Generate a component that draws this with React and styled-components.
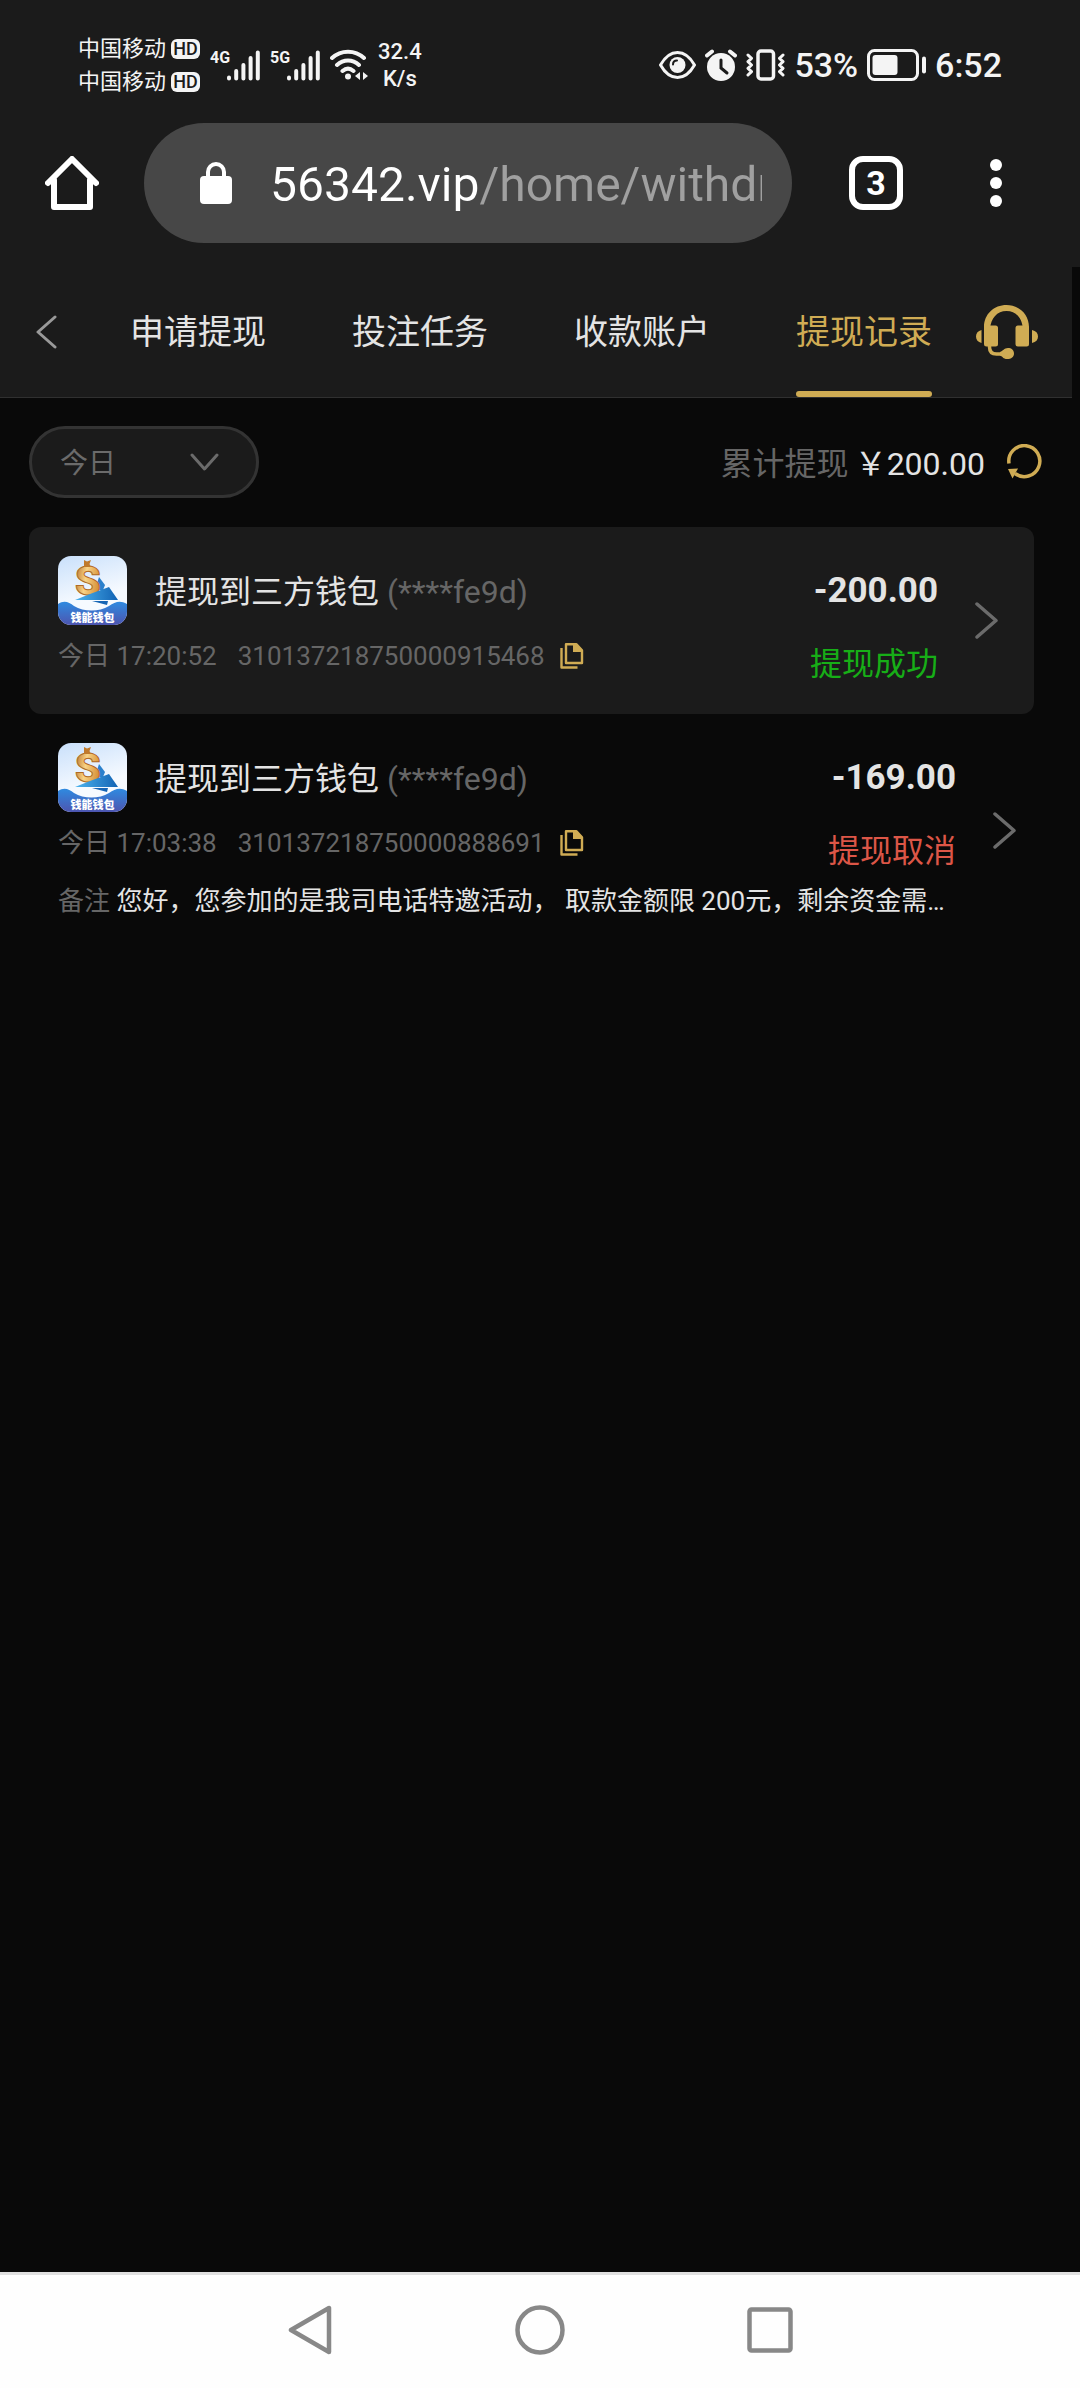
import React, { useState } from "react";
import styled, { createGlobalStyle } from "styled-components";

const GOLD = "#d0ac54";

const GlobalStyle = createGlobalStyle`
  * { box-sizing: border-box; }
  body {
    margin: 0; background: #090909; color: #e4e4e4;
    font-family: Roboto, "Noto Sans CJK SC", sans-serif;
  }
  button, select, input { font-family: inherit; }
  svg { display: block; flex: none; }
`;

const Screen = styled.div`
  min-height: 100vh; display: flex; flex-direction: column;
`;
const IconButton = styled.button`
  display: flex; align-items: center; justify-content: center;
  padding: 0; border: 0; background: none; color: inherit;
  cursor: pointer; flex: none;
`;

/* status bar */
const StatusBar = styled.div`
  display: flex; justify-content: space-between; align-items: center;
  padding: 32px 78px 25px; background: #1b1b1b; color: #f4f4f4;
`;
const StatusGroup = styled.div`
  display: flex; align-items: center; gap: ${(p) => p.$gap}px;
`;
const Carrier = styled.div`
  display: flex; align-items: center; gap: 5px;
  font-size: 22px; line-height: 33px;
`;
const HdBadge = styled.span`
  width: 29px; border-radius: 6px; background: #f4f4f4; color: #1b1b1b;
  font-size: 18px; line-height: 20px; font-weight: 500; text-align: center;
`;
const Signal = styled.div`
  display: flex; align-items: flex-start;
`;
const SignalLabel = styled.span`
  width: 17px; white-space: nowrap;
  font-size: 16px; line-height: 16px; font-weight: 700;
`;
const NetSpeed = styled.div`
  font-size: 22px; line-height: 27px; font-weight: 500; text-align: center;
`;
const StatusText = styled.span`
  font-size: 34px; line-height: 40px; font-weight: 500;
`;

/* browser toolbar */
const Toolbar = styled.div`
  display: flex; align-items: center;
  padding: 0 48px 24px 45px; background: #1b1b1b; color: #fff;
`;
const AddressBar = styled.label`
  flex: 1; min-width: 0; height: 120px; margin: 0 57px 0 45px; padding: 0 30px 0 56px;
  display: flex; align-items: center; gap: 38px;
  border-radius: 60px; background: #474747;
`;
const AddressInput = styled.input`
  flex: 1; min-width: 0; height: 64px; padding: 2px 0 0; border: 0; outline: 0;
  font-size: 48px; color: transparent;
  background: linear-gradient(to right, #fff 208px, #a0a0a0 208px);
  background-clip: text; -webkit-background-clip: text;
`;
const TabCount = styled(IconButton)`
  width: 54px; height: 54px; border: 6px solid #fff; border-radius: 14px;
  font-size: 34px; line-height: 42px; font-weight: 700;
`;
const MenuButton = styled(IconButton)`
  width: 72px; height: 72px; margin-left: 57px;
`;

/* web page */
const Page = styled.main`
  flex: 1; margin-right: 8px;
`;
const Header = styled.header`
  display: flex; align-items: center; height: 131px; padding: 0 34px 0 36px;
  background: #1b1b1b; border-bottom: 1px solid #303030;
`;
const Tabs = styled.nav`
  flex: 1; display: flex; justify-content: space-between; align-self: stretch;
  margin: 0 44px 0 73px;
`;
const Tab = styled.a`
  padding-top: 39px; white-space: nowrap; text-decoration: none;
  font-size: 34px; line-height: 52px;
  color: ${(p) => (p.$active ? GOLD : "#e4e4e4")};
  &::after {
    content: ""; display: block; height: 6px; margin-top: 33px; border-radius: 3px;
    background: ${(p) => (p.$active ? GOLD : "transparent")};
  }
`;
const Summary = styled.div`
  display: flex; justify-content: space-between; align-items: center;
  padding: 28px 30px 29px 29px;
`;
const Filter = styled.label`
  display: grid; align-items: center; width: 230px; height: 72px; color: #6b6b6b;
  & > * { grid-area: 1 / 1; }
  & > svg { justify-self: end; margin-right: 40px; pointer-events: none; }
`;
const FilterSelect = styled.select`
  appearance: none; width: 100%; height: 100%; padding: 2px 28px 0;
  border: 3px solid #333; border-radius: 36px; background: #1b1b1b;
  color: inherit; font-size: 28px;
`;
const Total = styled.div`
  display: flex; align-items: center; font-size: 32px; line-height: 44px;
  & > span { padding-top: 3px; }
`;
const Muted = styled.span`
  color: #666;
`;
const Money = styled.span`
  margin: 0 22px 0 6px;
`;
const List = styled.ul`
  list-style: none; margin: 0; padding: 0 20px 0 29px;
`;
const Item = styled.li`
  display: flex; align-items: center; gap: 37px; padding: 29px 36px 29px 29px;
  margin-right: ${(p) => (p.$card ? "18px" : "0")};
  background: ${(p) => (p.$card ? "#1b1b1b" : "transparent")};
  border-radius: 12px;
`;
const ItemBody = styled.div`
  flex: 1; min-width: 0; display: grid; grid-template-columns: 1fr auto; row-gap: 16px;
`;
const Title = styled.div`
  display: flex; align-items: center; gap: 28px; height: 69px;
  font-size: 32px; line-height: 44px;
  & > span { padding-top: 3px; }
`;
const Meta = styled.div`
  display: flex; align-items: center; height: 30px; color: #666;
  font-size: 26px; line-height: 30px;
`;
const OrderNo = styled.span`
  margin: 0 15px 0 21px;
`;
const Amount = styled.div`
  font-size: 35px; line-height: 69px; font-weight: 700; text-align: right;
`;
const Status = styled.div`
  padding-top: 2px; font-size: 32px; line-height: 42px; text-align: right;
  color: ${(p) => (p.$ok ? "#17ae17" : "#dc5647")};
`;
const Note = styled.div`
  grid-column: 1 / -1; margin-top: -6px; padding-top: 2px;
  font-size: 26px; line-height: 34px;
  white-space: nowrap; overflow: hidden; text-overflow: ellipsis;
`;

/* system navigation */
const SystemNav = styled.nav`
  display: grid; grid-template-columns: repeat(3, 1fr); justify-items: center;
  height: 116px; padding: 0 18% 3px; border-top: 3px solid #e0e0e0;
  background: #fefefe; color: #888;
`;

const SignalBars = () => (
  <svg width="33" height="31" viewBox="0 0 33 31" stroke="currentColor" strokeWidth="4" strokeLinecap="round">
    <path d="M2 27.500v1M9.200 21v7.500M16.400 15v13.500M23.600 8v20.500M30.800 2.500v26" />
  </svg>
);
const WifiIcon = () => (
  <svg width="38" height="32" viewBox="0 0 38 32" fill="none" stroke="currentColor" strokeWidth="4" strokeLinecap="round">
    <path d="M2 9c9-8.500 23-8.500 32 0M7 16c6.500-6 15.500-6 22 0M12.500 22c3.500-3 7.500-3 11 0" />
    <circle cx="18" cy="27.500" r="3" fill="currentColor" stroke="none" />
    <path d="M30 23v8l-5-4zM33 23v8l5-4z" fill="currentColor" stroke="none" />
  </svg>
);
const EyeIcon = () => (
  <svg width="37" height="28" viewBox="0 0 37 28" fill="none" stroke="currentColor" strokeWidth="3">
    <path d="M1.500 14C6 6 12 1.500 18.500 1.500S31 6 35.500 14C31 22 25 26.500 18.500 26.500S6 22 1.500 14z" strokeLinejoin="round" />
    <circle cx="18.500" cy="14" r="8" fill="currentColor" stroke="none" />
    <path d="M14 13.500c0-2.500 1.500-4 4-4" stroke="#1b1b1b" strokeWidth="2" strokeLinecap="round" />
  </svg>
);
const AlarmIcon = () => (
  <svg width="32" height="32" viewBox="0 0 32 32" fill="none" strokeLinecap="round">
    <circle cx="16" cy="18" r="14" fill="currentColor" />
    <path d="M2 6.500L7 2.500M30 6.500L25 2.500" stroke="currentColor" strokeWidth="4" />
    <path d="M16 11v8l6 5" stroke="#1b1b1b" strokeWidth="3" />
  </svg>
);
const VibrateIcon = () => (
  <svg width="39" height="32" viewBox="0 0 39 32" fill="none" stroke="currentColor" strokeWidth="3" strokeLinejoin="round" strokeLinecap="round">
    <rect x="12" y="2" width="15.500" height="28" rx="3" strokeWidth="3.500" />
    <path d="M2 6l3.500 3.300L2 12.600l3.500 3.400L2 19.300l3.500 3.300L2 26M37 6l-3.500 3.300 3.500 3.300-3.500 3.400 3.500 3.300-3.500 3.300L37 26" />
  </svg>
);
const BatteryIcon = () => (
  <svg width="59" height="32" viewBox="0 0 59 32" fill="none" stroke="currentColor">
    <rect x="1.500" y="1.500" width="49" height="29" rx="6" strokeWidth="3" />
    <rect x="5.500" y="6" width="25" height="20" rx="3" fill="currentColor" stroke="none" />
    <path d="M57 9.500v13" strokeWidth="4" strokeLinecap="round" />
  </svg>
);
const HomeIcon = () => (
  <svg width="54" height="54" viewBox="0 0 54 54" fill="none" stroke="currentColor" strokeWidth="6" strokeLinecap="round" strokeLinejoin="round">
    <path d="M3 27L27 3l24 24M9 24v27h36V24" />
  </svg>
);
const LockIcon = () => (
  <svg width="32" height="42" viewBox="0 0 32 42" fill="none">
    <rect y="14" width="32" height="28" rx="4" fill="currentColor" />
    <path d="M8 16V10a8 8 0 0 1 16 0v6" stroke="currentColor" strokeWidth="4" />
  </svg>
);
const DotsIcon = () => (
  <svg width="12" height="48" viewBox="0 0 12 48" fill="currentColor">
    <circle cx="6" cy="6" r="6" />
    <circle cx="6" cy="24" r="6" />
    <circle cx="6" cy="42" r="6" />
  </svg>
);
const BackIcon = () => (
  <svg width="21" height="34" viewBox="0 0 21 34" fill="none" stroke="#999" strokeWidth="3" strokeLinecap="round" strokeLinejoin="round">
    <path d="M19 2L2 17l17 15" />
  </svg>
);
const HeadsetIcon = () => (
  <svg width="62" height="55" viewBox="0 0 62 55" fill={GOLD}>
    <path d="M8 24V22C8 9 18 0 30.500 0S53 9 53 22v2h-6C46 13 40 6 30.500 6S15 13 14 24z" />
    <rect x="8" y="20.500" width="14" height="21" rx="2.500" />
    <rect x="39.500" y="20.500" width="13.500" height="21" rx="2.500" />
    <path d="M5.500 25v13C2 37 0 35 0 31.500S2 26 5.500 25zM56 25v13c4-1 6-3 6-6.500S60 26 56 25z" />
    <path d="M13.500 40v2c0 4.500 2.500 7 7 7h6" fill="none" stroke={GOLD} strokeWidth="3.500" />
    <path d="M24 47c3-1 4-4 8-4 3.500 0 6 2 6 5.500S35.500 54 31 54c-4 0-4-2.500-7-3.500z" />
  </svg>
);
const ArrowDown = () => (
  <svg width="29" height="18" viewBox="0 0 29 18" fill="none" stroke="#6b6b6b" strokeWidth="3" strokeLinecap="round" strokeLinejoin="round">
    <path d="M2 2l12.500 14L27 2" />
  </svg>
);
const RefreshIcon = () => (
  <svg width="35" height="36" viewBox="0 0 35 36" fill="none">
    <path d="M2 19.500A15.500 15.500 0 1 1 8 29.500" stroke={GOLD} strokeWidth="3.500" />
    <path d="M1 25l10-.5-5.500 10z" fill={GOLD} />
  </svg>
);
const CopyIcon = () => (
  <svg width="24" height="26" viewBox="0 0 24 26" fill="none" stroke={GOLD} strokeWidth="2.400" strokeLinejoin="round">
    <path d="M6 1.200h10.500l5.500 6V20H6z" />
    <path d="M13 1v8h9V7l-5.500-6z" fill={GOLD} stroke="none" />
    <path d="M1.500 5v19.500h16" />
  </svg>
);
const ArrowRight = () => (
  <svg width="23" height="37" viewBox="0 0 23 37" fill="none" stroke="#6b6b6b" strokeWidth="3.500" strokeLinecap="round" strokeLinejoin="round">
    <path d="M2 2l19 16.500L2 35" />
  </svg>
);

const WalletLogo = ({ id }) => (
  <svg width="69" height="69" viewBox="0 0 69 69" aria-hidden="true">
    <defs>
      <linearGradient id={`${id}-sky`} x1="0" y1="0" x2="0.300" y2="1">
        <stop offset="0" stopColor="#c9e0fb" />
        <stop offset="0.700" stopColor="#f6faff" />
      </linearGradient>
      <linearGradient id={`${id}-sea`} x1="0" y1="0" x2="0" y2="1">
        <stop offset="0" stopColor="#2f8ae0" />
        <stop offset="1" stopColor="#4d55b0" />
      </linearGradient>
      <linearGradient id={`${id}-gold`} x1="0" y1="0" x2="1" y2="0.300">
        <stop offset="0" stopColor="#b3641c" />
        <stop offset="0.500" stopColor="#f8d386" />
        <stop offset="1" stopColor="#d8923a" />
      </linearGradient>
      <linearGradient id={`${id}-boat`} x1="0" y1="0" x2="1" y2="0">
        <stop offset="0" stopColor="#4db4ee" />
        <stop offset="1" stopColor="#1263b4" />
      </linearGradient>
      <clipPath id={`${id}-clip`}>
        <rect width="69" height="69" rx="13" />
      </clipPath>
    </defs>
    <g clipPath={`url(#${id}-clip)`}>
      <rect width="69" height="69" fill={`url(#${id}-sky)`} />
      <path d="M41 21l6 8-2 5h-8z" fill="#2a80cc" />
      <text x="17" y="39" fontFamily="Roboto" fontWeight="900" fontSize="41" fill={`url(#${id}-gold)`} stroke="#b06a24" strokeWidth="1">S</text>
      <path d="M26 4l3 1.500L33 4l-1.500 4L33 11h-7z" fill="#c07a2c" />
      <path d="M17 44l15-6 19-7 9 13z" fill={`url(#${id}-boat)`} />
      <path d="M34 45h16l-1 4z" fill="#1665b5" />
      <path d="M0 48c6-4 11-2 16 2 10 6 25 6 35 0 6-4 11-6 18-2v21H0z" fill={`url(#${id}-sea)`} />
      <text x="34.500" y="66" textAnchor="middle" fontFamily="Noto Sans CJK SC" fontWeight="900" fontSize="11" fill="#fff">钱能钱包</text>
    </g>
  </svg>
);

const tabs = ["申请提现", "投注任务", "收款账户", "提现记录"];
const records = [
  {
    time: "17:20:52",
    orderNo: "310137218750000915468",
    amount: "-200.00",
    status: "提现成功",
    ok: true,
  },
  {
    time: "17:03:38",
    orderNo: "310137218750000888691",
    amount: "-169.00",
    status: "提现取消",
    note: "您好，您参加的是我司电话特邀活动， 取款金额限 200元，剩余资金需…",
  },
];

const Record = ({ record }) => (
  <Item $card={record.ok}>
    <ItemBody>
      <Title>
        <WalletLogo id={`w${record.orderNo}`} />
        <span>
          提现到三方钱包 <Muted>(****fe9d)</Muted>
        </span>
      </Title>
      <Amount>{record.amount}</Amount>
      <Meta>
        <span>今日 {record.time}</span>
        <OrderNo>{record.orderNo}</OrderNo>
        <IconButton
          aria-label="复制"
          onClick={() => navigator.clipboard?.writeText(record.orderNo)}
        >
          <CopyIcon />
        </IconButton>
      </Meta>
      <Status $ok={record.ok}>{record.status}</Status>
      {record.note ? (
        <Note>
          <Muted>备注</Muted> {record.note}
        </Note>
      ) : null}
    </ItemBody>
    <IconButton aria-label="详情">
      <ArrowRight />
    </IconButton>
  </Item>
);

export default function App() {
  const [active, setActive] = useState("提现记录");
  const [day, setDay] = useState("今日");
  return (
    <Screen>
      <GlobalStyle />
      <StatusBar>
        <StatusGroup $gap={10}>
          <div>
            <Carrier>中国移动<HdBadge>HD</HdBadge></Carrier>
            <Carrier>中国移动<HdBadge>HD</HdBadge></Carrier>
          </div>
          <Signal><SignalLabel>4G</SignalLabel><SignalBars /></Signal>
          <Signal><SignalLabel>5G</SignalLabel><SignalBars /></Signal>
          <WifiIcon />
          <NetSpeed>32.4<br />K/s</NetSpeed>
        </StatusGroup>
        <StatusGroup $gap={9}>
          <EyeIcon />
          <AlarmIcon />
          <VibrateIcon />
          <StatusText>53%</StatusText>
          <BatteryIcon />
          <StatusText>6:52</StatusText>
        </StatusGroup>
      </StatusBar>
      <Toolbar>
        <IconButton aria-label="主页"><HomeIcon /></IconButton>
        <AddressBar>
          <LockIcon />
          <AddressInput aria-label="网址" defaultValue="56342.vip/home/withdraw" />
        </AddressBar>
        <TabCount>3</TabCount>
        <MenuButton aria-label="菜单"><DotsIcon /></MenuButton>
      </Toolbar>
      <Page>
        <Header>
          <IconButton aria-label="返回"><BackIcon /></IconButton>
          <Tabs>
            {tabs.map((name) => (
              <Tab key={name} href="#" $active={name === active} onClick={() => setActive(name)}>
                {name}
              </Tab>
            ))}
          </Tabs>
          <IconButton aria-label="客服"><HeadsetIcon /></IconButton>
        </Header>
        <Summary>
          <Filter>
            <FilterSelect aria-label="日期" value={day} onChange={(e) => setDay(e.target.value)}>
              <option>今日</option>
              <option>昨日</option>
            </FilterSelect>
            <ArrowDown />
          </Filter>
          <Total>
            <Muted>累计提现</Muted>
            <Money>￥200.00</Money>
            <IconButton aria-label="刷新"><RefreshIcon /></IconButton>
          </Total>
        </Summary>
        <List>
          {records.map((record) => (
            <Record key={record.orderNo} record={record} />
          ))}
        </List>
      </Page>
      <SystemNav>
        <IconButton aria-label="后退">
          <svg width="44" height="50" viewBox="0 0 44 50" fill="none" stroke="currentColor" strokeWidth="4.500" strokeLinejoin="round">
            <path d="M41 3v44L3 25z" />
          </svg>
        </IconButton>
        <IconButton aria-label="桌面">
          <svg width="50" height="50" viewBox="0 0 50 50" fill="none" stroke="currentColor" strokeWidth="4.500">
            <circle cx="25" cy="25" r="22.500" />
          </svg>
        </IconButton>
        <IconButton aria-label="最近任务">
          <svg width="46" height="46" viewBox="0 0 46 46" fill="none" stroke="currentColor" strokeWidth="4.500">
            <rect x="2.500" y="2.500" width="41" height="41" rx="2" />
          </svg>
        </IconButton>
      </SystemNav>
    </Screen>
  );
}
